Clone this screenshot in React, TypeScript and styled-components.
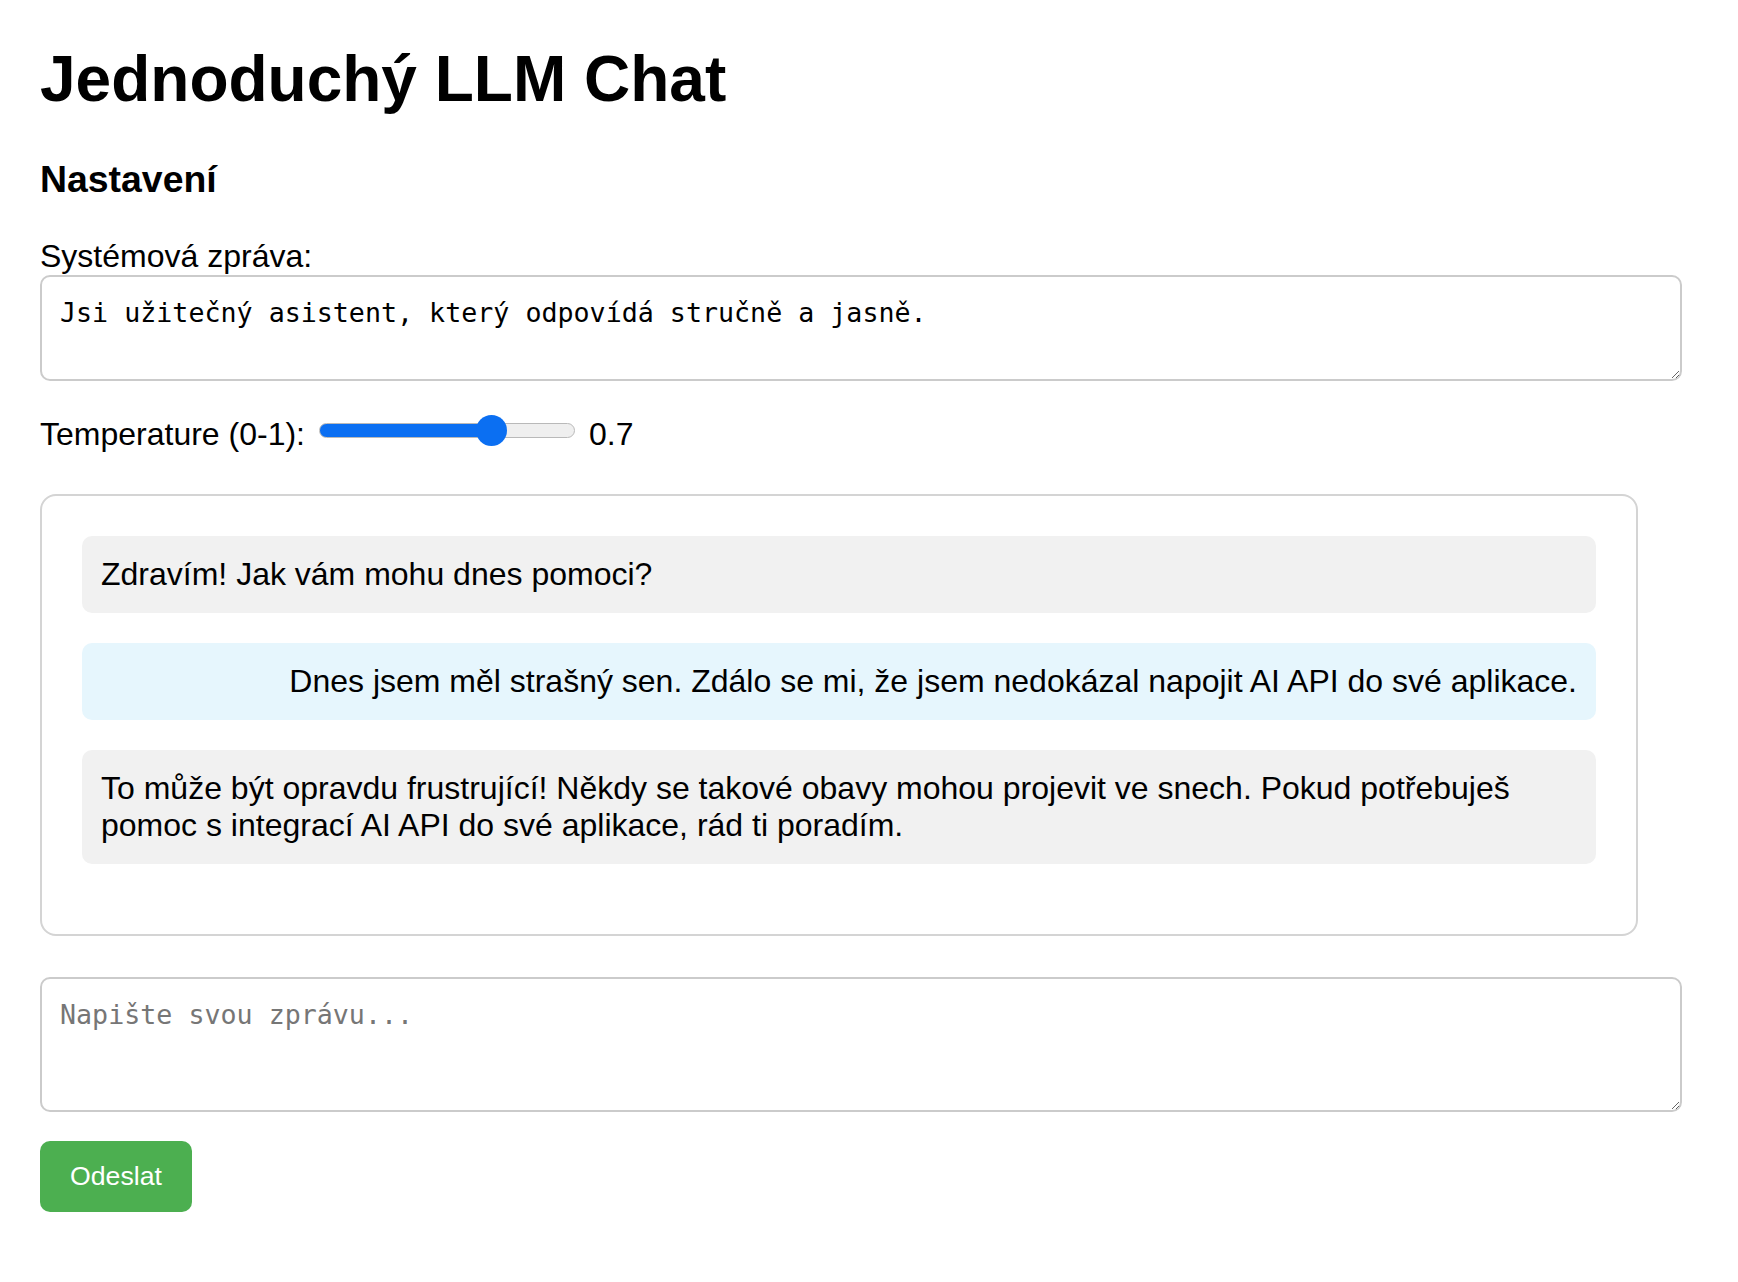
import React, { useState } from "react";
import styled, { createGlobalStyle } from "styled-components";

const GlobalStyle = createGlobalStyle`
  html, body {
    margin: 0;
    padding: 0;
    background: #fff;
  }
  body {
    font-family: "Liberation Sans", Arial, Helvetica, sans-serif;
    color: #000;
  }
`;

const Page = styled.div`
  padding: 42px 56px 60px 40px;
`;

const Title = styled.h1`
  margin: 0 0 42px;
  font-size: 64px;
  font-weight: bold;
`;

const SectionTitle = styled.h3`
  margin: 0 0 37px;
  font-size: 37.4px;
  font-weight: bold;
`;

const Label = styled.label`
  display: block;
  font-size: 32px;
`;

const TextArea = styled.textarea<{ $height: number }>`
  display: block;
  box-sizing: border-box;
  width: 100%;
  height: ${p => p.$height}px;
  margin: 0;
  padding: 20px 18px;
  border: 2px solid #cbcbcb;
  border-radius: 10px;
  font-family: "DejaVu Sans Mono", "Liberation Mono", monospace;
  font-size: 26.67px;
  color: #000;
  background: #fff;
  resize: vertical;
  outline: none;

  &::placeholder {
    color: #767676;
  }
`;

const TempRow = styled.div`
  display: flex;
  align-items: center;
  margin-top: 34px;
  font-size: 32px;
`;

const Slider = styled.input<{ $fill: number }>`
  -webkit-appearance: none;
  appearance: none;
  width: 256px;
  height: 31px;
  margin: 0 14px 8px 14px;
  padding: 0;
  background: transparent;

  &::-webkit-slider-runnable-track {
    height: 15px;
    box-sizing: border-box;
    border-radius: 8px;
    border: 1.5px solid #b9b9b9;
    background: linear-gradient(
      to right,
      #0b6ff2 0,
      #0b6ff2 ${p => p.$fill}%,
      #efefef ${p => p.$fill}%,
      #efefef 100%
    );
  }

  &::-webkit-slider-thumb {
    -webkit-appearance: none;
    width: 31px;
    height: 31px;
    margin-top: -9.5px;
    border-radius: 50%;
    border: none;
    background: #0b6ff2;
  }
`;

const ChatBox = styled.div`
  box-sizing: border-box;
  width: 1598px;
  margin-top: 40px;
  padding: 40px;
  border: 2px solid #d4d4d4;
  border-radius: 16px;
`;

const Bubble = styled.div<{ $user?: boolean }>`
  margin-bottom: 30px;
  padding: 20px 19px;
  border-radius: 10px;
  font-size: 32px;
  background: ${p => (p.$user ? "#e6f6fd" : "#f1f1f1")};
  text-align: ${p => (p.$user ? "right" : "left")};
`;

const InputArea = styled.div`
  margin-top: 41px;
`;

const SendButton = styled.button`
  display: block;
  margin-top: 29px;
  padding: 20px 30px;
  border: none;
  border-radius: 10px;
  background: #4caf50;
  color: #fff;
  font-family: "Liberation Sans", Arial, sans-serif;
  font-size: 26.67px;
  cursor: pointer;
`;

const messages = [
  { user: false, text: "Zdravím! Jak vám mohu dnes pomoci?" },
  {
    user: true,
    text: "Dnes jsem měl strašný sen. Zdálo se mi, že jsem nedokázal napojit AI API do své aplikace.",
  },
  {
    user: false,
    text: "To může být opravdu frustrující! Někdy se takové obavy mohou projevit ve snech. Pokud potřebuješ pomoc s integrací AI API do své aplikace, rád ti poradím.",
  },
];

export default function App() {
  const [system, setSystem] = useState(
    "Jsi užitečný asistent, který odpovídá stručně a jasně."
  );
  const [temp, setTemp] = useState(0.7);
  const [draft, setDraft] = useState("");

  return (
    <Page>
      <GlobalStyle />
      <Title>Jednoduchý LLM Chat</Title>
      <SectionTitle>Nastavení</SectionTitle>
      <Label htmlFor="system">Systémová zpráva:</Label>
      <TextArea
        id="system"
        $height={106}
        value={system}
        onChange={e => setSystem(e.target.value)}
      />
      <TempRow>
        <span>Temperature (0-1):</span>
        <Slider
          type="range"
          min={0}
          max={1}
          step={0.1}
          value={temp}
          $fill={temp * 100}
          onChange={e => setTemp(parseFloat(e.target.value))}
        />
        <span>{temp.toFixed(1)}</span>
      </TempRow>
      <ChatBox>
        {messages.map((m, i) => (
          <Bubble key={i} $user={m.user}>
            {m.text}
          </Bubble>
        ))}
      </ChatBox>
      <InputArea>
        <TextArea
          $height={135}
          placeholder="Napište svou zprávu..."
          value={draft}
          onChange={e => setDraft(e.target.value)}
        />
      </InputArea>
      <SendButton>Odeslat</SendButton>
    </Page>
  );
}
